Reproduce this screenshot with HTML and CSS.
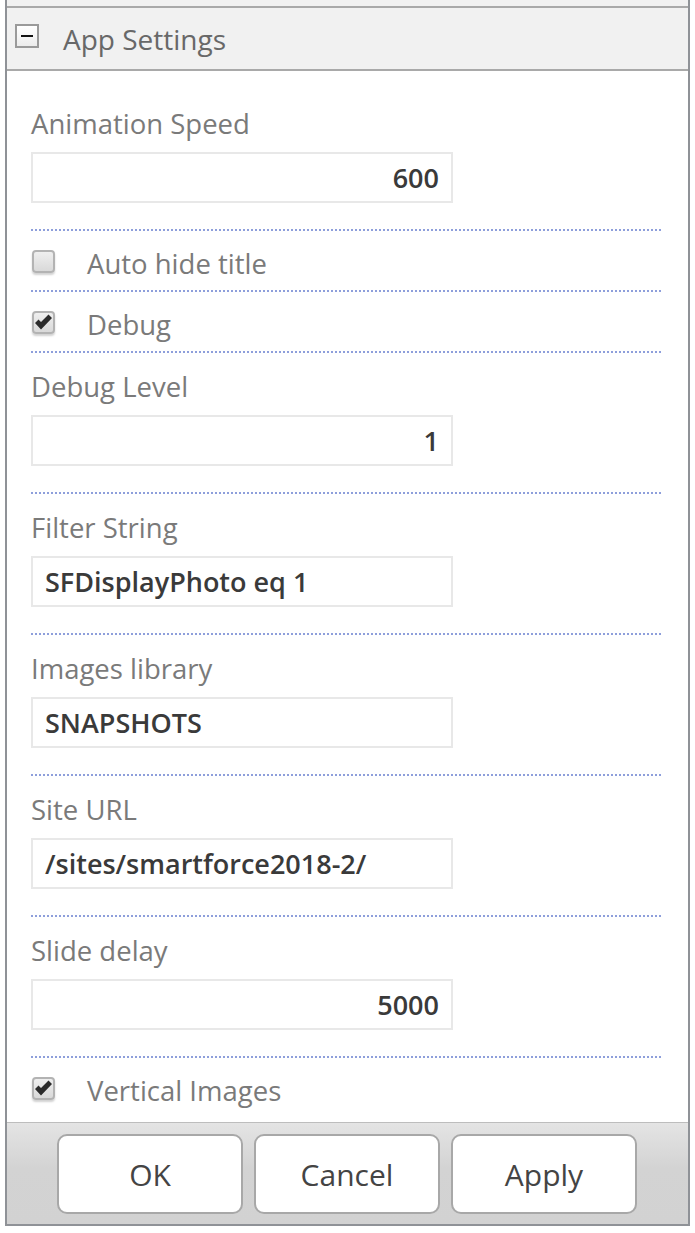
FILE: index.html
```html
<!DOCTYPE html>
<html>
<head>
<meta charset="utf-8">
<link rel="stylesheet" href="styles.css">
</head>
<body>
<div class="pane">
  <div class="prev"></div>
  <div class="header">
    <span class="toggle"><span class="minus"></span></span>
    <span class="title">App Settings</span>
  </div>
  <div class="body">
    <div class="field">
      <div class="label">Animation Speed</div>
      <div class="input num">600</div>
    </div>
    <div class="sep"></div>
    <div class="check">
      <span class="cb"></span>
      <span class="clabel">Auto hide title</span>
    </div>
    <div class="sep"></div>
    <div class="check">
      <span class="cb"><svg viewBox="0 0 23 23" width="23" height="23"><path d="M3 12 L6.5 8.5 L9 11 L16.5 3.5 L20 7 L9 18.5 Z" fill="#2b2b2b"/></svg></span>
      <span class="clabel">Debug</span>
    </div>
    <div class="sep"></div>
    <div class="field">
      <div class="label">Debug Level</div>
      <div class="input num">1</div>
    </div>
    <div class="sep"></div>
    <div class="field">
      <div class="label">Filter String</div>
      <div class="input">SFDisplayPhoto eq 1</div>
    </div>
    <div class="sep"></div>
    <div class="field">
      <div class="label">Images library</div>
      <div class="input">SNAPSHOTS</div>
    </div>
    <div class="sep"></div>
    <div class="field">
      <div class="label">Site URL</div>
      <div class="input">/sites/smartforce2018-2/</div>
    </div>
    <div class="sep"></div>
    <div class="field">
      <div class="label">Slide delay</div>
      <div class="input num">5000</div>
    </div>
    <div class="sep"></div>
    <div class="check last">
      <span class="cb"><svg viewBox="0 0 23 23" width="23" height="23"><path d="M3 12 L6.5 8.5 L9 11 L16.5 3.5 L20 7 L9 18.5 Z" fill="#2b2b2b"/></svg></span>
      <span class="clabel">Vertical Images</span>
    </div>
  </div>
  <div class="footer">
    <div class="btn">OK</div>
    <div class="btn">Cancel</div>
    <div class="btn">Apply</div>
  </div>
</div>
</body>
</html>
```
FILE: styles.css
```css
html, body {
  margin: 0;
  padding: 0;
  background: #ffffff;
}
body {
  font-family: "Open Sans", "Noto Sans", sans-serif;
}
.pane {
  margin-left: 5px;
  width: 685px;
  box-sizing: border-box;
  border-left: 2px solid #8f9297;
  border-right: 2px solid #8f9297;
  border-bottom: 2px solid #8f9297;
}
.prev {
  height: 6px;
  background: #f1f1f1;
}
.header {
  height: 61px;
  background: #f1f1f1;
  border-top: 2px solid #a9a9a9;
  border-bottom: 2px solid #a9a9a9;
  display: flex;
  align-items: center;
}
.toggle {
  width: 24px;
  height: 24px;
  box-sizing: border-box;
  margin-left: 8px;
  margin-top: -6px;
  border: 2px solid #9a9a9a;
  background: linear-gradient(#ffffff, #ececec);
  display: flex;
  align-items: center;
  justify-content: center;
}
.minus {
  width: 12px;
  height: 2px;
  background: #111;
}
.title {
  margin-left: 24px;
  font-size: 28px;
  color: #686868;
  line-height: 36px;
}
.body {
  padding: 18px 25px 5px 24px;
}
.field {
  padding: 20px 0 26px 0;
}
.label {
  font-size: 27.5px;
  line-height: 30px;
  color: #7a7a7a;
}
.input {
  margin-top: 13px;
  width: 422px;
  height: 51px;
  box-sizing: border-box;
  border: 2px solid #e8e8e8;
  padding: 0 12px;
  font-size: 27px;
  font-weight: 600;
  color: #3a3a3a;
  line-height: 47px;
  white-space: nowrap;
}
.input.num {
  text-align: right;
}
.sep {
  height: 2px;
  background-image: linear-gradient(to right, #8e9fdb 50%, transparent 50%);
  background-size: 4px 2px;
  margin-bottom: -1px;
}
.check {
  display: flex;
  align-items: center;
  padding: 18px 0 10px 0;
  height: 32px;
}
.cb {
  width: 23px;
  height: 23px;
  box-sizing: border-box;
  margin-left: 1px;
  margin-bottom: 6px;
  border: 2px solid #b3b3b3;
  border-radius: 4px;
  background: linear-gradient(#efefef, #d9d9d9);
  box-shadow: 0 2px 2px rgba(0, 0, 0, 0.18);
  position: relative;
  overflow: visible;
}
.cb svg {
  position: absolute;
  left: -2px;
  top: -2px;
}
.clabel {
  margin-left: 32px;
  font-size: 27.5px;
  line-height: 32px;
  color: #7a7a7a;
}
.footer {
  border-top: 1px solid #bdbdbd;
  background: linear-gradient(#e4e4e4, #d3d3d3 45%, #d2d2d2);
  padding: 11px 0 10px 50px;
  display: flex;
  gap: 11px;
}
.btn {
  width: 186px;
  height: 80px;
  box-sizing: border-box;
  border: 2px solid #a8a8a8;
  border-radius: 10px;
  background: #ffffff;
  font-size: 30px;
  color: #444444;
  display: flex;
  align-items: center;
  justify-content: center;
}
```
